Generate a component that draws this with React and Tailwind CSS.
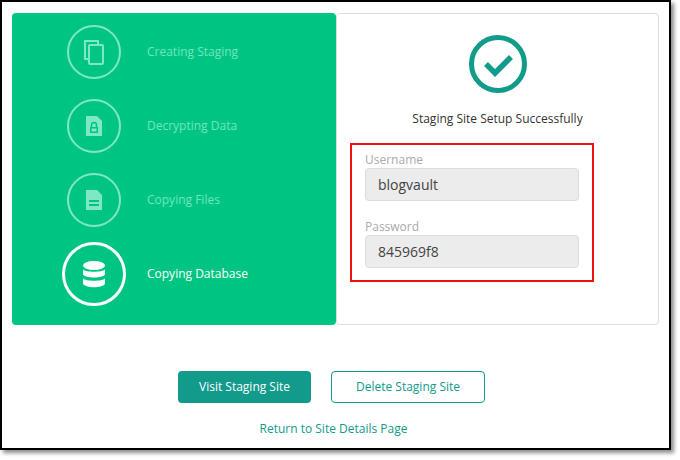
const steps = [
  { label: "Creating Staging", icon: "copy" },
  { label: "Decrypting Data", icon: "lock" },
  { label: "Copying Files", icon: "file" },
];

const StepIcon = ({ type }) => {
  if (type === "copy")
    return (
      <svg width="22" height="26" viewBox="0 0 22 26" fill="none" stroke="#7ee8c6" strokeWidth="2">
        <path d="M5 20H2V2h13v3" />
        <rect x="6" y="6" width="14" height="19" rx="1" />
      </svg>
    );
  if (type === "lock")
    return (
      <svg width="18" height="22" viewBox="0 0 18 22">
        <path d="M1 1h11l5 5v15H1z" fill="#7ee8c6" />
        <rect x="5" y="12" width="8" height="6" fill="#00c582" />
        <path d="M6.5 12v-2a2.5 2.5 0 0 1 5 0v2" stroke="#00c582" strokeWidth="1.5" fill="none" />
        <rect x="6.5" y="13.5" width="5" height="3" fill="#7ee8c6" />
      </svg>
    );
  return (
    <svg width="18" height="22" viewBox="0 0 18 22">
      <path d="M1 1h11l5 5v15H1z" fill="#7ee8c6" />
      <rect x="4" y="11" width="10" height="2" fill="#00c582" />
      <rect x="4" y="15" width="10" height="2" fill="#00c582" />
    </svg>
  );
};

export default function App() {
  return (
    <div className="w-[680px] h-[460px] bg-white" style={{ fontFamily: '"Open Sans", sans-serif' }}>
      <div className="w-[671px] h-[450px] border-2 border-black shadow-[3px_3px_4px_rgba(0,0,0,0.45)] bg-white">
        <div className="flex mt-[11px] ml-[10px] w-[647px] h-[312px]">
          <div className="w-[324px] bg-[#00c582] rounded flex flex-col pt-[2px]">
            {steps.map((s) => (
              <div key={s.label} className="flex items-center h-[74px]">
                <div className="ml-[55px] w-[54px] h-[54px] rounded-full border-2 border-[#7ee8c6] flex items-center justify-center">
                  <StepIcon type={s.icon} />
                </div>
                <span className="ml-[26px] text-[12px] text-[#6fe6c0]">{s.label}</span>
              </div>
            ))}
            <div className="flex items-center h-[74px]">
              <div className="ml-[50px] w-[64px] h-[64px] rounded-full border-[3px] border-white flex items-center justify-center">
                <svg width="24" height="27" viewBox="0 0 24 27" fill="white">
                  <ellipse cx="12" cy="4.5" rx="11" ry="4.5" />
                  <path d="M1 8.5c2 3 20 3 22 0v5c-2 4-20 4-22 0z" />
                  <path d="M1 17.5c2 3 20 3 22 0v5c-2 5-20 5-22 0z" />
                </svg>
              </div>
              <span className="ml-[21px] text-[12px] text-white">Copying Database</span>
            </div>
          </div>
          <div className="flex-1 border border-[#ddd] rounded flex flex-col items-center">
            <svg className="mt-[20px]" width="60" height="60" viewBox="0 0 60 60" fill="none" stroke="#109b8a" strokeWidth="5">
              <circle cx="30" cy="30" r="26.5" />
              <path d="M18 30l9 9 16-16" strokeWidth="5.5" />
            </svg>
            <div className="mt-[16px] text-[12px] text-[#333]">Staging Site Setup Successfully</div>
            <div className="mt-[15px] self-start ml-[13px] w-[244px] h-[139px] border-2 border-[#f01010] px-[13px] pt-[8px]">
              <div className="text-[12px] leading-[14px] text-[#aaa]">Username</div>
              <div className="mt-[1px] h-[33px] bg-[#ececec] border border-[#ddd] rounded flex items-center px-[12px] text-[14px] text-[#444]">blogvault</div>
              <div className="mt-[19px] text-[12px] leading-[14px] text-[#aaa]">Password</div>
              <div className="mt-[1px] h-[33px] bg-[#ececec] border border-[#ddd] rounded flex items-center px-[12px] text-[14px] text-[#444]">845969f8</div>
            </div>
          </div>
        </div>
        <div className="flex justify-center gap-[20px] mt-[46px] ml-[-8px]">
          <button className="w-[133px] h-[32px] bg-[#129a8b] text-white text-[12px] rounded-sm">Visit Staging Site</button>
          <button className="w-[154px] h-[32px] border border-[#129a8b] text-[#129a8b] text-[12px] rounded-sm">Delete Staging Site</button>
        </div>
        <div className="text-center mt-[17px] text-[12px] text-[#129a8b] ml-[-4px]">Return to Site Details Page</div>
      </div>
    </div>
  );
}
